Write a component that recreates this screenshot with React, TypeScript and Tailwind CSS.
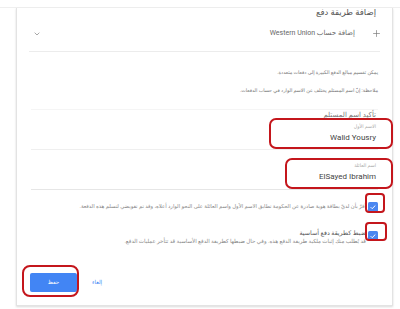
import React from "react";

const font = { fontFamily: "Roboto, 'DejaVu Sans', sans-serif" };

function Check() {
  return (
    <div className="w-[10px] h-[10px] rounded-[1.5px] bg-[#4a86f0] flex items-center justify-center">
      <svg width="8" height="8" viewBox="0 0 24 24">
        <path d="M5 12.5l4.5 4.5L19 7.5" fill="none" stroke="#fff" strokeWidth="3" />
      </svg>
    </div>
  );
}

export default function App() {
  return (
    <div className="relative w-[400px] h-[309px] bg-white overflow-hidden" style={font}>
      <div className="h-[8px] border-b border-[#efefef]" />
      <div
        dir="rtl"
        className="ml-[16px] w-[377px] h-[298px] border-l border-r border-b border-[#e3e3e3] shadow-[0_1px_2px_rgba(0,0,0,0.15)] flex flex-col"
      >
        <div className="h-[8px] pr-[16px] flex items-center text-[8.5px] text-[#555] leading-none">
          إضافة طريقة دفع
        </div>
        <div className="mx-[12px] h-[36px] border-b border-[#ececec] flex items-center">
          <svg width="9" height="9" viewBox="0 0 24 24" className="ml-[8px] mr-[-1px]">
            <path d="M12 3v18M3 12h18" stroke="#777" strokeWidth="1.8" />
          </svg>
          <span className="text-[7px] text-[#666] mr-[9px]">إضافة حساب Western Union</span>
          <div className="flex-1" />
          <svg width="8" height="8" viewBox="0 0 24 24" className="ml-[4px]">
            <path d="M5 8l7 7 7-7" fill="none" stroke="#888" strokeWidth="2.2" />
          </svg>
        </div>
        <div className="h-[18px]" />
        <div className="pr-[14px] text-[4.9px] text-[#777] leading-none">
          يمكن تقسيم مبالغ الدفع الكبيرة إلى دفعات متعددة.
        </div>
        <div className="h-[13px]" />
        <div className="pr-[14px] text-[4.9px] text-[#777] leading-none">
          ملاحظة: إنّ اسم المستلم يختلف عن الاسم الوارد في حساب الدفعات.
        </div>
        <div className="h-[17px] border-b border-[#f5f5f5] mx-[14px]" />
        <div className="mt-[2px] pr-[16px] text-[7px] text-[#777] leading-none">تأكيد اسم المستلم</div>
        <div className="mx-[14px] h-[31px] border-b border-[#efefef] flex flex-col items-start pr-[2px]">
          <div className="mt-[6px] text-[4.8px] text-[#aaa] leading-none">الاسم الأول</div>
          <div className="mt-[4px] text-[8px] text-[#444] leading-none">Walid Yousry</div>
        </div>
        <div className="mx-[14px] h-[40px] border-b border-[#e6e6e6] flex flex-col items-start pr-[2px]">
          <div className="mt-[14px] text-[4.8px] text-[#aaa] leading-none">اسم العائلة</div>
          <div className="mt-[4px] text-[8px] text-[#444] leading-none">ElSayed Ibrahim</div>
        </div>
        <div className="h-[12px]" />
        <div className="pr-[14px] flex items-center">
          <Check />
          <span className="mr-[2px] text-[5.3px] text-[#888] leading-none">
            أقرّ بأن لديّ بطاقة هوية صادرة عن الحكومة تطابق الاسم الأول واسم العائلة على النحو الوارد أعلاه، وقد تم تفويضي لتسلم هذه الدفعة.
          </span>
        </div>
        <div className="h-[19px]" />
        <div className="pr-[14px] flex items-start">
          <Check />
          <div className="mr-[2px] flex flex-col items-start">
            <span className="text-[6.3px] text-[#555] leading-none mt-[-1px]">ضبط كطريقة دفع أساسية</span>
            <span className="mt-[3px] text-[5.5px] text-[#888] leading-none">
              قد يُطلب منك إثبات ملكية طريقة الدفع هذه. وفي حال ضبطها كطريقة الدفع الأساسية قد تتأخر عمليات الدفع.
            </span>
          </div>
        </div>
        <div className="flex-1" />
        <div dir="ltr" className="pl-[13px] pb-[13px] flex items-center">
          <div className="w-[47px] h-[19px] bg-[#4285f4] rounded-[2px] flex items-center justify-center text-[5.5px] text-white">
            حفظ
          </div>
          <div className="ml-[15px] text-[5.5px] text-[#4285f4]">إلغاء</div>
        </div>
      </div>
      <div className="absolute left-[269px] top-[118px] w-[124px] h-[31px] border-2 border-[#c4161c] rounded-[7px]" />
      <div className="absolute left-[285px] top-[158px] w-[108px] h-[31px] border-2 border-[#c4161c] rounded-[7px]" />
      <div className="absolute left-[365px] top-[193px] w-[20px] h-[20px] border-2 border-[#c4161c] rounded-[4px]" />
      <div className="absolute left-[365px] top-[222px] w-[22px] h-[19px] border-2 border-[#c4161c] rounded-[4px]" />
      <div className="absolute left-[22px] top-[265px] w-[57px] h-[32px] border-2 border-[#c4161c] rounded-[8px]" />
    </div>
  );
}
